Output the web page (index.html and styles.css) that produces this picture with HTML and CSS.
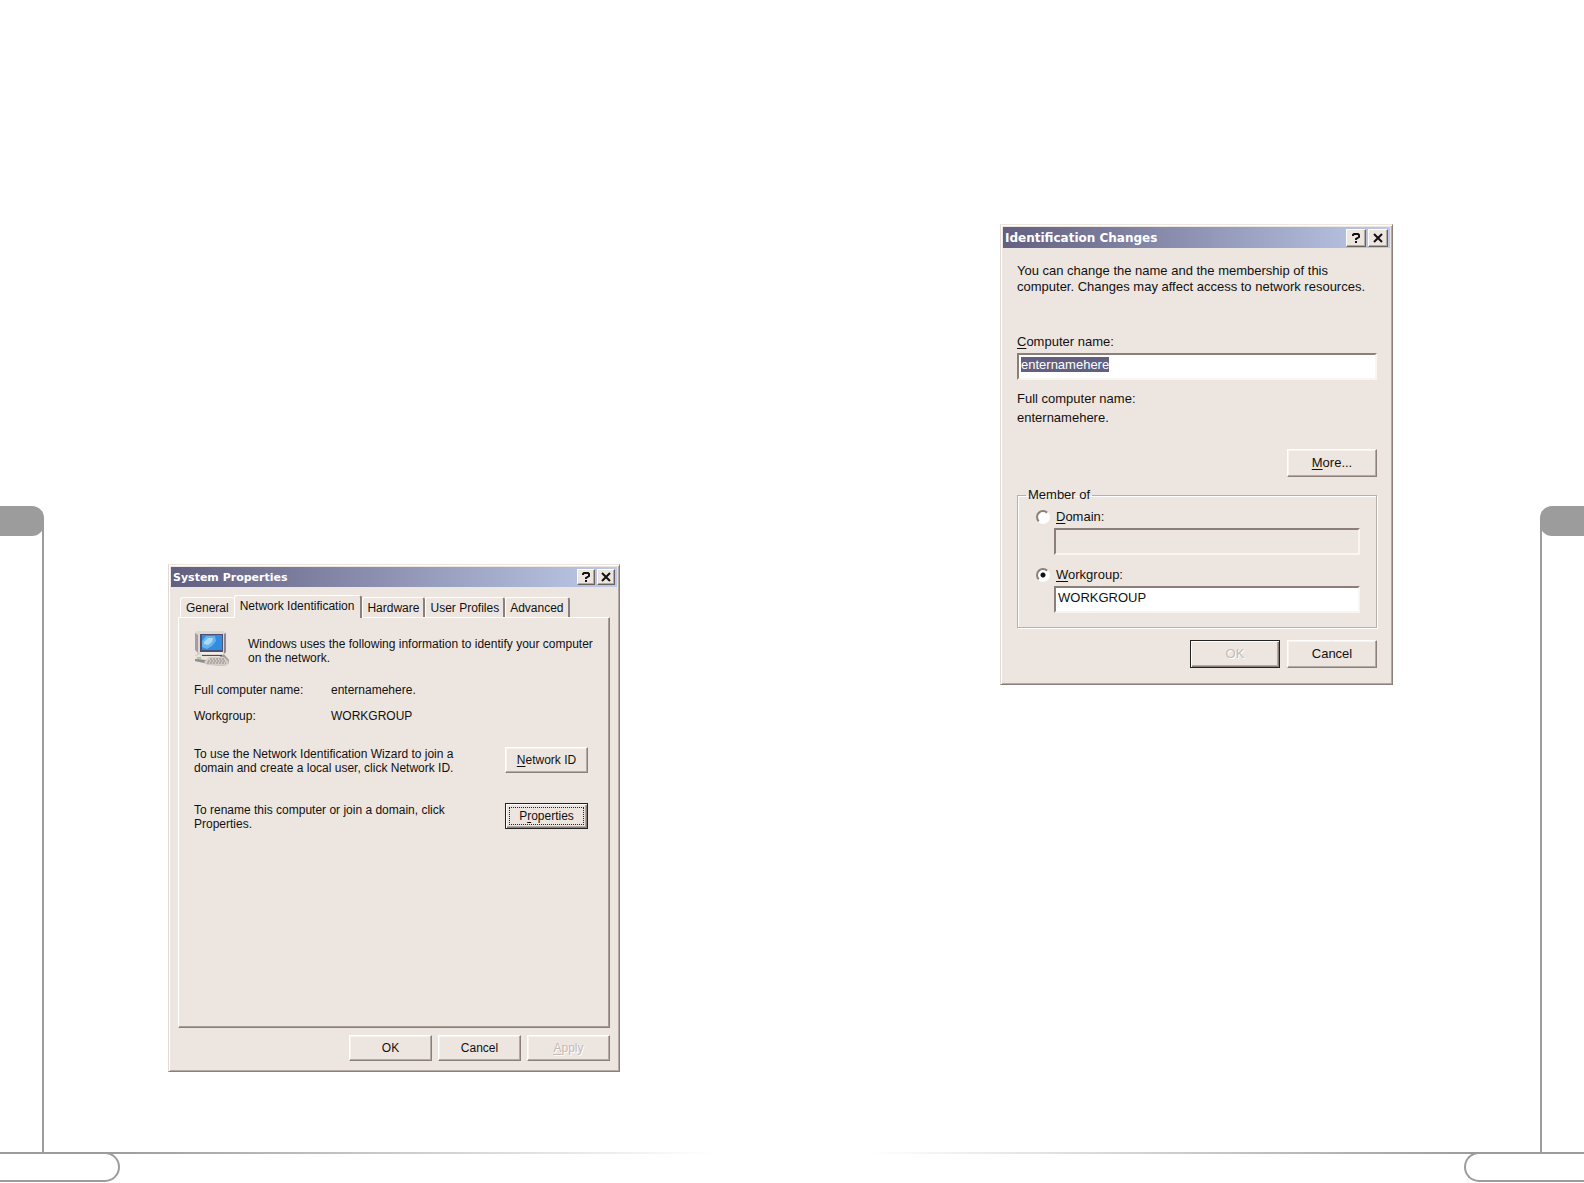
FILE: index.html
```html
<!DOCTYPE html>
<html lang="en">
<head>
  <meta charset="UTF-8">
  <meta name="viewport" content="width=device-width, initial-scale=1">
  <title>Network Identification</title>
  <link rel="stylesheet" href="styles.css">
</head>
<body>
<div class="spread">
  <div class="page page-left">
    <div class="page-body">
      <div class="side"><div class="side-tab"></div><div class="side-line"></div></div>
      <main class="sheet">
        <section class="dialog system" aria-labelledby="system-title">
          <header class="titlebar">
            <h2 id="system-title">System Properties</h2>
            <button class="title-btn" type="button" aria-label="Help">
              <svg viewBox="0 0 12 12"><path d="M3 4V3L4 2h4l1 1v2L6 7v1M6 9v2"/></svg>
            </button>
            <button class="title-btn" type="button" aria-label="Close">
              <svg viewBox="0 0 12 12"><path d="M2 2l8 8M10 2l-8 8"/></svg>
            </button>
          </header>
          <div class="system-body">
            <div class="tabs" role="tablist">
              <button class="tab" type="button" role="tab">General</button>
              <button class="tab active" type="button" role="tab" aria-selected="true">Network Identification</button>
              <button class="tab" type="button" role="tab">Hardware</button>
              <button class="tab" type="button" role="tab">User Profiles</button>
              <button class="tab" type="button" role="tab">Advanced</button>
            </div>
            <div class="panel" role="tabpanel">
              <div class="intro">
                <svg class="computer" viewBox="0 0 36 36">
                  <path d="M1 25l5-4h22l7 8v3l-4 3-13-1-17-4z" fill="#a39a9f"/>
                  <path d="M1 25l5-3h20v6l-5 2-20-2z" fill="#e8e2d9"/>
                  <path d="M1 28l19 2v3L1 30z" fill="#938b90"/>
                  <path d="M1 2l2-2h27l2 2v19l-3 3H7l-5-4z" fill="#dcd7d2"/>
                  <path d="M1 2l3 2v18l-3-3z" fill="#a59da3"/>
                  <path d="M30 3l2-1v19l-2 2z" fill="#8f8790"/>
                  <path d="M6 3h23v18H6z" fill="#504f70"/>
                  <path d="M8 4h20v15H8z" fill="#2f8de2"/>
                  <path d="M8 16v-6l4-5h9l1 5-4 5-5 3z" fill="#69b3ec"/>
                  <path d="M10 11l4-4h5l-1 4-4 3-4-1z" fill="#a9daf6"/>
                  <path d="M6 21h23v2H7z" fill="#f0ece6"/>
                  <path d="M8 24h20v1H8z" fill="#4f4856"/>
                  <path d="M10 31l5-5h15l5 5-3 4-19-1z" fill="#d6ccc4"/>
                  <path d="M16 28h15M14 30h18M13 32h19" stroke="#8d848c" stroke-dasharray="2 1" fill="none"/>
                  <path d="M3 27h4" stroke="#71b77e"/>
                </svg>
                <p>Windows uses the following information to identify your computer<br>on the network.</p>
              </div>
              <dl class="facts">
                <dt>Full computer name:</dt><dd>enternamehere.</dd>
                <dt>Workgroup:</dt><dd>WORKGROUP</dd>
              </dl>
              <div class="action">
                <p>To use the Network Identification Wizard to join a<br>domain and create a local user, click Network ID.</p>
                <button class="btn" type="button"><span><u>N</u>etwork ID</span></button>
              </div>
              <div class="action">
                <p>To rename this computer or join a domain, click<br>Properties.</p>
                <button class="btn default focused" type="button"><span>P<u>r</u>operties</span></button>
              </div>
            </div>
            <div class="buttons">
              <button class="btn" type="button">OK</button>
              <button class="btn" type="button">Cancel</button>
              <button class="btn" type="button" disabled><span><u>A</u>pply</span></button>
            </div>
          </div>
        </section>
      </main>
    </div>
    <footer class="page-foot"><div class="folio"></div><div class="rule"></div></footer>
  </div>

  <div class="page page-right">
    <div class="page-body">
      <div class="side"><div class="side-tab"></div><div class="side-line"></div></div>
      <main class="sheet">
        <form class="dialog changes" aria-labelledby="changes-title">
          <header class="titlebar">
            <h2 id="changes-title">Identification Changes</h2>
            <button class="title-btn" type="button" aria-label="Help">
              <svg viewBox="0 0 12 12"><path d="M3 4V3L4 2h4l1 1v2L6 7v1M6 9v2"/></svg>
            </button>
            <button class="title-btn" type="button" aria-label="Close">
              <svg viewBox="0 0 12 12"><path d="M2 2l8 8M10 2l-8 8"/></svg>
            </button>
          </header>
          <div class="changes-body">
            <p class="lead">You can change the name and the membership of this<br>computer. Changes may affect access to network resources.</p>
            <label for="computer-name"><u>C</u>omputer name:</label>
            <input class="field" id="computer-name" type="text" value="enternamehere" spellcheck="false">
            <p class="full-name">Full computer name:<br>enternamehere.</p>
            <div class="buttons">
              <button class="btn" type="button"><span><u>M</u>ore...</span></button>
            </div>
            <fieldset>
              <legend>Member of</legend>
              <div class="option">
                <input type="radio" name="member" id="domain">
                <label for="domain"><u>D</u>omain:</label>
              </div>
              <input class="field" type="text" aria-label="Domain" disabled>
              <div class="option">
                <input type="radio" name="member" id="workgroup" checked>
                <label for="workgroup"><u>W</u>orkgroup:</label>
              </div>
              <input class="field" type="text" aria-label="Workgroup" value="WORKGROUP" spellcheck="false">
            </fieldset>
            <div class="buttons">
              <button class="btn default" type="button" disabled>OK</button>
              <button class="btn" type="button">Cancel</button>
            </div>
          </div>
        </form>
      </main>
    </div>
    <footer class="page-foot"><div class="folio"></div><div class="rule"></div></footer>
  </div>
</div>
<script>
// Start with the name selected, ready to be typed over
const nameField = document.getElementById('computer-name');
nameField.focus();
nameField.select();
</script>
</body>
</html>
```
FILE: styles.css
```css
:root {
  --face: #ede6e0;
  --light: #fff;
  --shadow: #8c7f79;
  --mid: #b5a9a3;
  --navy: #625f80;
  --rule: #9c9c9c;
}
* { box-sizing: border-box; }
body {
  margin: 0;
  background: #fff;
  color: #111;
  font-family: "Liberation Sans", Arial, sans-serif;
  font-size: 12px;
  line-height: 14px;
}
h2, p, dl, dd { margin: 0; }
button, input { font: inherit; color: inherit; }
u { text-underline-offset: 2px; }

/* Facing pages */
.spread { display: grid; grid-template-columns: 1fr 1fr; min-height: 100vh; }
.page { display: flex; flex-direction: column; }
.page-body { flex: 1; display: flex; }
.page-right .page-body, .page-right .page-foot { flex-direction: row-reverse; }
.side { width: 44px; padding-top: 506px; display: flex; flex-direction: column; }
.side-tab { height: 30px; background: var(--rule); border-radius: 0 12px 12px 0; }
.side-line { flex: 1; margin-top: -16px; border-right: 2px solid var(--rule); }
.page-right .side-tab { border-radius: 12px 0 0 12px; }
.page-right .side-line { border-right: 0; border-left: 2px solid var(--rule); }
.sheet { flex: 1; display: flex; }
.page-left .sheet { align-items: flex-end; padding: 0 0 80px 124px; }
.page-right .sheet { align-items: flex-start; padding: 224px 0 0 208px; }
.page-foot { display: flex; height: 31px; }
.folio { width: 120px; height: 30px; border: 2px solid var(--rule); border-left: 0; border-radius: 0 15px 15px 0; }
.page-right .folio { border-left: 2px solid var(--rule); border-right: 0; border-radius: 15px 0 0 15px; }
.rule { flex: 1; height: 2px; margin: 0 76px 0 -14px; background: linear-gradient(90deg, var(--rule), #fff); }
.page-right .rule { margin: 0 -14px 0 76px; background: linear-gradient(270deg, var(--rule), #fff); }

/* Dialogs */
.dialog {
  background: var(--face);
  border: 1px solid;
  border-color: var(--face) var(--shadow) var(--shadow) #e0dad5;
  box-shadow: inset 1px 1px var(--light), inset -1px -1px var(--mid);
  padding: 2px;
}
.system { width: 452px; }
.changes { width: 393px; font-size: 13px; line-height: 16px; }
.titlebar {
  display: flex;
  align-items: center;
  height: 20px;
  padding: 0 2px;
  background: linear-gradient(90deg, var(--navy), #bdc9e8);
}
.changes .titlebar { height: 21px; }
.titlebar h2 {
  flex: 1;
  color: #fff;
  font: bold 11px "DejaVu Sans", sans-serif;
}
.changes .titlebar h2 { font-size: 12px; }
.title-btn {
  width: 18px;
  height: 16px;
  padding: 0;
  background: var(--face);
  border: 1px solid;
  border-color: var(--light) #6b625f #6b625f var(--light);
  box-shadow: inset -1px -1px var(--mid);
}
.title-btn + .title-btn { margin-left: 2px; }
.changes .title-btn { width: 20px; height: 18px; }
.title-btn svg { display: block; width: 12px; height: 12px; margin: 0 auto; fill: none; stroke: #111; stroke-width: 2; }

.btn {
  width: 83px;
  height: 26px;
  padding: 0;
  background: var(--face);
  border: 1px solid;
  border-color: var(--light) var(--shadow) var(--shadow) var(--light);
  box-shadow: inset -1px -1px var(--mid), inset 1px 1px #f6f2ee;
}
.btn.default { border-color: #222; box-shadow: inset 1px 1px var(--light), inset -1px -1px var(--shadow), inset -2px -2px var(--mid); }
.btn:disabled { color: #c5bab4; text-shadow: 1px 1px #fff; }
.btn.focused { padding: 3px; }
.btn.focused span { display: block; height: 18px; border: 1px dotted #222; line-height: 16px; }
.changes .btn { width: 90px; height: 28px; }
.buttons { display: flex; justify-content: flex-end; gap: 6px; }
.changes .buttons { gap: 7px; }

/* System Properties */
.system-body { padding: 8px 7px; }
.tabs { display: flex; align-items: flex-end; padding-left: 2px; }
.tab {
  height: 20px;
  padding: 0 4px;
  background: var(--face);
  border: 1px solid var(--light);
  border-right: 2px solid var(--shadow);
  border-bottom: 0;
  border-radius: 3px 3px 0 0;
  white-space: nowrap;
}
.tab:first-child { padding: 0 5px; border-right: 0; }
.tab.active { height: 23px; padding: 0 6px 2px 5px; margin-bottom: -1px; }
.panel {
  min-height: 411px;
  padding: 13px 21px 0 15px;
  border: 1px solid;
  border-color: var(--light) var(--shadow) var(--shadow) var(--light);
  box-shadow: inset -1px -1px #a89c96;
}
.intro { display: flex; gap: 18px; }
.intro p { padding-top: 6px; white-space: nowrap; }
.computer { flex: none; width: 36px; height: 36px; }
.facts { display: grid; grid-template-columns: 137px 1fr; row-gap: 12px; margin: 16px 0 24px; }
.action { display: flex; justify-content: space-between; height: 56px; }
.system-body > .buttons { margin-top: 7px; }

/* Identification Changes */
.changes-body { display: flex; flex-direction: column; padding: 15px 13px 14px 14px; }
.lead { margin-bottom: 39px; white-space: nowrap; }
.field {
  width: 100%;
  height: 27px;
  padding: 0 2px 4px;
  background: #fff;
  border: 2px solid;
  border-color: var(--shadow) #f8f5f2 #f8f5f2 var(--shadow);
  outline: 0;
}
.field:disabled { background: var(--face); }
.field::selection { background: var(--navy); color: #fff; }
#computer-name { margin-top: 3px; }
.full-name { margin: 9px 0 22px; line-height: 19px; }
fieldset {
  margin: 10px 0 12px;
  padding: 6px 16px 14px 18px;
  border: 1px solid #b9aea8;
  box-shadow: inset 1px 1px #fff, 1px 1px #fff;
}
legend { margin-left: -10px; padding: 0 2px; }
.option { display: flex; align-items: center; gap: 6px; margin-bottom: 3px; }
.option input {
  appearance: none;
  width: 14px;
  height: 14px;
  margin: 0;
  border: 2px solid;
  border-color: var(--shadow) #fff #fff var(--shadow);
  border-radius: 50%;
  background: #fff;
}
.option input:checked { background: radial-gradient(circle, #111 2px, #fff 3px); }
fieldset .field { width: calc(100% - 18px); margin-left: 18px; }
fieldset .field + .option { margin-top: 12px; }
```
